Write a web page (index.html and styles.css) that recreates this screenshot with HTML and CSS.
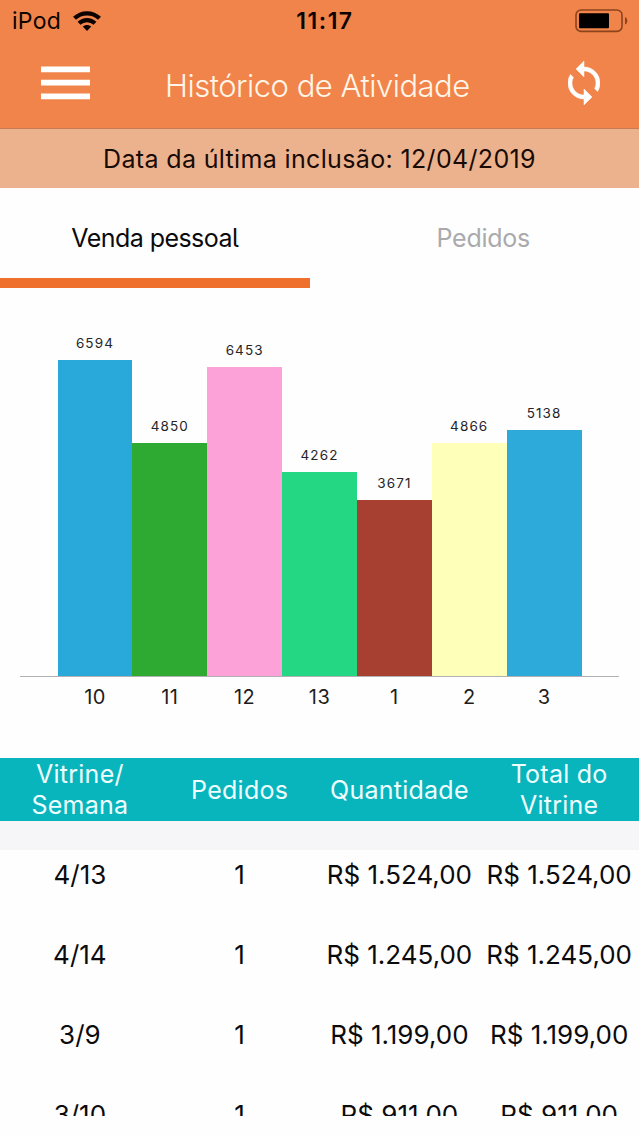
FILE: index.html
```html
<!DOCTYPE html>
<html lang="pt-BR">
<head>
<meta charset="utf-8">
<title>Histórico de Atividade</title>
<link rel="stylesheet" href="styles.css">
</head>
<body>
<header class="top">
  <div class="status">
    <div class="carrier"><span class="device">iPod</span>
      <svg class="wifi" viewBox="0 0 28 20" width="28" height="20"><g fill="none" stroke="#0c0300" stroke-width="4.2"><path d="M1.500 7.300C8.400.600 19.600.600 26.500 7.300"/><path d="M6 12.300c4.500-4.300 11.500-4.300 16 0"/></g><path fill="#0c0300" d="M14 20l-4.300-4.400c2.400-2.200 6.200-2.200 8.600 0z"/></svg>
    </div>
    <span class="clock">11:17</span>
    <svg class="battery" viewBox="0 0 54 24" width="54" height="24"><rect x="1" y="1" width="46" height="21.400" rx="5" fill="none" stroke="#8c431e" stroke-width="1.600"/><rect x="4" y="4.300" width="30" height="15" rx="1" fill="#000"/><path d="M50 8v7.600c3-1 3-6.600 0-7.600z" fill="#8c431e"/></svg>
  </div>
  <div class="nav">
    <svg class="menu" viewBox="0 0 49 34" width="49" height="34"><path fill="#fff" d="M0 .5h49v5.700H0zM0 13.800h49v5.700H0zM0 27.600h49v5.700H0z"/></svg>
    <h1 class="title">Histórico de Atividade</h1>
    <svg class="sync" viewBox="4 1 16 22" width="32" height="44"><path fill="#fff" stroke="#fff" stroke-width=".25" d="M12 4V1L8 5l4 4V6c3.310 0 6 2.690 6 6 0 1.010-.25 1.970-.7 2.800l1.460 1.460C19.540 15.030 20 13.570 20 12c0-4.420-3.580-8-8-8zm0 14c-3.310 0-6-2.690-6-6 0-1.010.25-1.970.7-2.800L5.240 7.740C4.460 8.970 4 10.430 4 12c0 4.420 3.580 8 8 8v3l4-4-4-4v3z"/></svg>
  </div>
</header>
<div class="banner"><span class="banner-text">Data da última inclusão: 12/04/2019</span></div>
<nav class="tabs">
  <div class="tab active"><span>Venda pessoal</span></div>
  <div class="tab"><span>Pedidos</span></div>
</nav>
<section class="chart">
  <div class="bars">
    <div class="col"><span class="value">6594</span><div class="bar" style="height:316.3px;background:#29a9d9"></div></div>
    <div class="col"><span class="value">4850</span><div class="bar" style="height:232.7px;background:#2eaa33"></div></div>
    <div class="col"><span class="value">6453</span><div class="bar" style="height:309.5px;background:#fda1d9"></div></div>
    <div class="col"><span class="value">4262</span><div class="bar" style="height:204.4px;background:#23d783"></div></div>
    <div class="col"><span class="value">3671</span><div class="bar" style="height:176px;background:#a84031"></div></div>
    <div class="col"><span class="value">4866</span><div class="bar" style="height:233.4px;background:#feffb9"></div></div>
    <div class="col"><span class="value">5138</span><div class="bar" style="height:246.4px;background:#2eaada"></div></div>
  </div>
  <div class="axis"><span>10</span><span>11</span><span>12</span><span>13</span><span>1</span><span>2</span><span>3</span></div>
</section>
<section class="table">
  <div class="head"><span>Vitrine/<br>Semana</span><span class="single">Pedidos</span><span class="single">Quantidade</span><span>Total do<br>Vitrine</span></div>
  <div class="gap"></div>
  <div class="rows">
    <div class="row"><span>4/13</span><span>1</span><span>R$ 1.524,00</span><span>R$ 1.524,00</span></div>
    <div class="row"><span>4/14</span><span>1</span><span>R$ 1.245,00</span><span>R$ 1.245,00</span></div>
    <div class="row"><span>3/9</span><span>1</span><span>R$ 1.199,00</span><span>R$ 1.199,00</span></div>
    <div class="row"><span>3/10</span><span>1</span><span>R$ 911,00</span><span>R$ 911,00</span></div>
  </div>
</section>
</body>
</html>
```
FILE: styles.css
```css
* { box-sizing: border-box; }
body {
  margin: 0;
  width: 639px;
  height: 1136px;
  overflow: hidden;
  background: #fefefe;
  color: #0b0b0e;
  font-family: Inter, "Liberation Sans", sans-serif;
  font-size: 26px;
}
svg { display: block; }
.top { height: 129px; background: #f1844a; border-bottom: 1px solid #c87b51; }
.status {
  display: grid;
  grid-template-columns: 1fr auto 1fr;
  align-items: center;
  height: 40px;
  padding: 1px 10px 0 12px;
  color: #0c0300;
}
.carrier { display: flex; align-items: center; gap: 12px; }
.device { font-size: 23px; letter-spacing: .3px; }
.clock { font-size: 23px; font-weight: 600; letter-spacing: 1.5px; padding-left: 9px; }
.battery { justify-self: end; }
.nav {
  display: flex;
  align-items: center;
  height: 88px;
  padding: 0 39px 2px 41px;
}
.title { margin: 5px auto 0 75px; color: #fff5e8; font-size: 31px; font-weight: 300; line-height: 40px; letter-spacing: -.5px; white-space: nowrap; }
.banner { display: flex; align-items: center; justify-content: center; height: 59px; background: #ecb28d; color: #180a04; white-space: nowrap; }
.banner-text { font-size: 25px; letter-spacing: .35px; }
.tabs { display: flex; height: 100px; }
.tab { flex: 1; display: flex; align-items: center; justify-content: center; border-bottom: 10px solid transparent; padding-top: 10px; padding-left: 18px; color: #aaaaad; font-size: 25px; letter-spacing: -.25px; }
.tab.active { flex: 0 0 309.5px; padding-left: 0; border-color: #ee702c; color: #0b0b0e; letter-spacing: -.55px; font-feature-settings: "cv05"; }
.chart { height: 470px; padding: 30px 20px 0; }
.bars { display: flex; align-items: flex-end; height: 359px; padding: 0 37.5px; border-bottom: 1px solid #b3b3b7; }
.col { flex: 1; display: flex; flex-direction: column; align-items: center; }
.bar { width: 100%; }
.value { font-size: 13.5px; line-height: 18px; margin-bottom: 8px; letter-spacing: 1.100px; color: #252529; }
.axis { display: flex; padding: 8px 37.5px 0; font-size: 20px; line-height: 24px; letter-spacing: .4px; color: #1d1d20; }
.axis span { flex: 1; text-align: center; }
.head, .row { display: grid; grid-template-columns: repeat(4, 1fr); text-align: center; white-space: nowrap; }
.head { align-items: center; height: 63px; background: #08b5bd; color: #effeff; font-size: 25px; line-height: 31px; letter-spacing: .25px; }
.single { padding-top: 2px; }
.gap { height: 29px; background: #f6f6f8; }
.rows { height: 265.5px; overflow: hidden; }
.row { height: 80px; line-height: 50px; justify-items: center; }
```
